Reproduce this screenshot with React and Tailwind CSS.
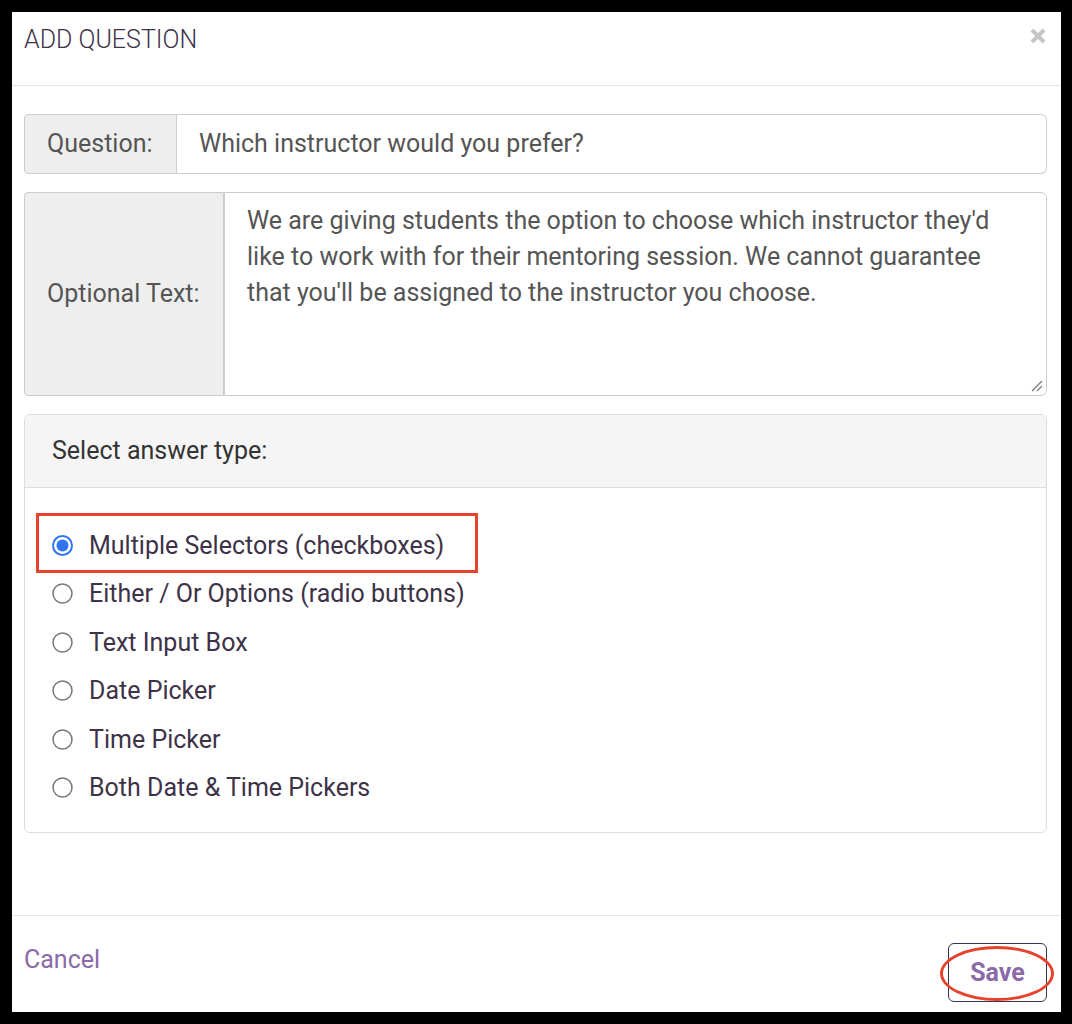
import React from "react";

const options = [
  "Multiple Selectors (checkboxes)",
  "Either / Or Options (radio buttons)",
  "Text Input Box",
  "Date Picker",
  "Time Picker",
  "Both Date & Time Pickers",
];

const Radio = ({ checked }) =>
  checked ? (
    <svg width="21" height="21" viewBox="0 0 21 21" className="shrink-0">
      <circle cx="10.5" cy="10.5" r="9.5" fill="white" stroke="#2f74f1" strokeWidth="2" />
      <circle cx="10.5" cy="10.5" r="6" fill="#2f74f1" />
    </svg>
  ) : (
    <svg width="21" height="21" viewBox="0 0 21 21" className="shrink-0">
      <circle cx="10.5" cy="10.5" r="9.5" fill="white" stroke="#777" strokeWidth="1.5" />
    </svg>
  );

const App = () => {
  return (
    <div
      className="w-[1072px] h-[1024px] bg-white border-black border-t-[12px] border-l-[12px] border-r-[11px] border-b-[12px] flex flex-col text-[25px]"
      style={{ fontFamily: "Roboto, 'Liberation Sans', sans-serif" }}
    >
      {/* header */}
      <div className="h-[74px] shrink-0 border-b border-[#e5e5e5] flex justify-between items-start pl-[12px] pr-[15px]">
        <h4 className="mt-[13px] leading-[30px] font-light text-[#3d3247]">ADD QUESTION</h4>
        <button className="mt-[16px]">
          <svg width="16" height="16" viewBox="0 0 16 16">
            <path d="M2 2 L14 14 M14 2 L2 14" stroke="#c6c6c6" strokeWidth="4" />
          </svg>
        </button>
      </div>

      {/* body */}
      <div className="flex-1 pl-[12px] pr-[14px] pt-[28px] flex flex-col">
        <div className="flex h-[60px]">
          <div className="w-[153px] shrink-0 bg-[#eeeeee] border border-[#cccccc] rounded-l-[4px] flex items-center pl-[22px] text-[#555]">
            Question:
          </div>
          <div className="flex-1 border border-l-0 border-[#cccccc] rounded-r-[6px] flex items-center pl-[22px] text-[#555]">
            Which instructor would you prefer?
          </div>
        </div>

        <div className="flex h-[204px] mt-[18px]">
          <div className="w-[200px] shrink-0 bg-[#eeeeee] border border-[#cccccc] rounded-l-[4px] flex items-center pl-[22px] text-[#555]">
            Optional Text:
          </div>
          <div className="relative flex-1 border border-[#cccccc] rounded-r-[6px] pl-[22px] pt-[10px] leading-[36px] text-[#555]">
            <div>We are giving students the option to choose which instructor they'd</div>
            <div>like to work with for their mentoring session. We cannot guarantee</div>
            <div>that you'll be assigned to the instructor you choose.</div>
            <svg width="12" height="12" viewBox="0 0 12 12" className="absolute right-[3px] bottom-[3px]">
              <path d="M1 11 L11 1 M6 11 L11 6" stroke="#777" strokeWidth="1.2" />
            </svg>
          </div>
        </div>

        <div className="mt-[18px] border border-[#dddddd] rounded-[6px]">
          <div className="h-[73px] bg-[#f5f5f5] border-b border-[#dddddd] rounded-t-[6px] flex items-center pl-[27px] text-[#333]">
            Select answer type:
          </div>
          <div className="pl-[27px] pt-[33px] pb-[20px] flex flex-col">
            {options.map((o, i) => (
              <div key={o} className="relative h-[48.5px] flex items-center gap-[16px] text-[#3d3247]">
                <Radio checked={i === 0} />
                <span>{o}</span>
                {i === 0 && (
                  <div className="absolute left-[-16px] top-[-8px] w-[442px] h-[60px] border-[3px] border-[#e5432e] pointer-events-none" />
                )}
              </div>
            ))}
          </div>
        </div>
      </div>

      {/* footer */}
      <div className="h-[97px] shrink-0 border-t border-[#e5e5e5] flex justify-between items-start pl-[12px] pr-[14px]">
        <a className="mt-[29px] leading-[30px] text-[#8b6aa7]">Cancel</a>
        <button className="relative mt-[27px] w-[99px] h-[59px] border border-[#3d3247] rounded-[6px] font-bold text-[#8b6aa7]">
          Save
          <div className="absolute left-[-9px] top-[2px] w-[114px] h-[55px] border-[3px] border-[#e5432e] rounded-[50%] pointer-events-none" />
        </button>
      </div>
    </div>
  );
};

export default App;
